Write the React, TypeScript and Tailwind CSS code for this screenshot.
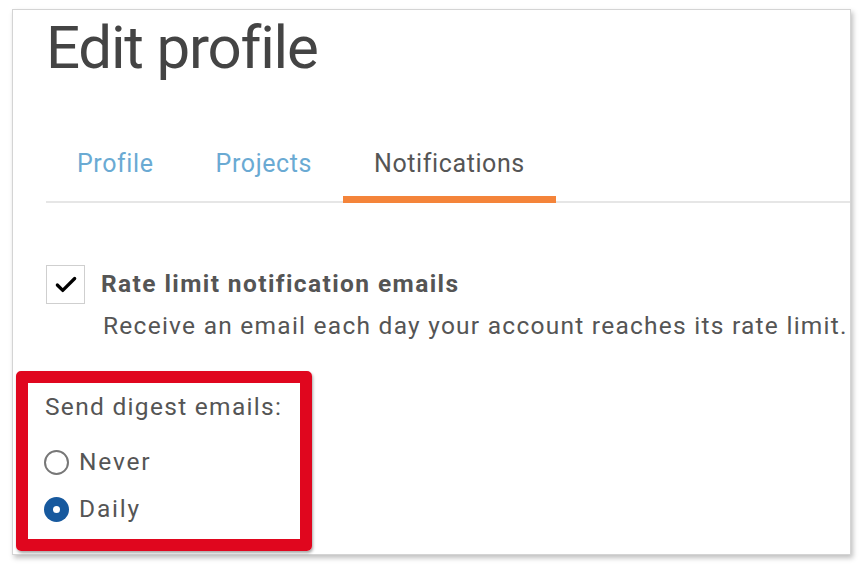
import { Check } from "lucide-react";

const tabs = ["Profile", "Projects", "Notifications"];

const Radio = ({ checked, label }: { checked?: boolean; label: string }) => (
  <label className="flex items-center gap-[10px] h-[26px]">
    {checked ? (
      <span className="w-[25px] h-[25px] rounded-full bg-[#17599e] flex items-center justify-center">
        <span className="w-[7px] h-[7px] rounded-full bg-white" />
      </span>
    ) : (
      <span className="w-[25px] h-[25px] rounded-full border-2 border-[#777]" />
    )}
    <span className="text-[24.5px] text-[#555] tracking-[1.8px]">{label}</span>
  </label>
);

export default function App() {
  return (
    <div className="w-[860px] h-[570px] bg-white pt-[9px] pl-[12px] font-['Roboto',sans-serif] text-[#555]">
      <div className="w-[839px] h-[546px] border border-[#d4d4d4] bg-white shadow-[2px_3px_5px_rgba(0,0,0,0.25)] pl-[33px] flex flex-col">
        <h1 className="text-[60px] leading-none text-[#444] tracking-[-1.2px] mt-[8px] h-[60px]">
          Edit profile
        </h1>

        <div className="flex mt-[63px] border-b-2 border-[#e6e6e6]">
          {tabs.map((t, i) => (
            <div
              key={t}
              className={
                i === 2
                  ? "px-[31px] pt-[8px] pb-[17px] text-[25px] leading-[30px] tracking-[0.6px] text-[#555] border-b-[7px] border-[#f4843a] -mb-[2px]"
                  : "px-[31px] pt-[8px] pb-[17px] text-[25px] leading-[30px] tracking-[0.6px] text-[#6aaad3] border-b-[7px] border-transparent -mb-[2px]"
              }
            >
              {t}
            </div>
          ))}
        </div>

        <div className="flex mt-[62px] gap-[16px]">
          <span className="w-[39px] h-[39px] border border-[#cfcfcf] flex items-center justify-center shrink-0">
            <Check className="w-[26px] h-[26px] text-black" strokeWidth={3} />
          </span>
          <div className="flex flex-col pt-[4px]">
            <span className="text-[24.5px] font-bold leading-[30px] tracking-[1.4px] text-[#555]">
              Rate limit notification emails
            </span>
            <span className="text-[24.5px] leading-[30px] tracking-[1.25px] text-[#555] mt-[12px] ml-[2px]">
              Receive an email each day your account reaches its rate limit.
            </span>
          </div>
        </div>

        <div className="-ml-[30px] mt-[30px] w-[296px] h-[180px] border-[12px] border-[#e0061e] rounded-[5px] shadow-[1px_2px_3px_rgba(0,0,0,0.35)] pl-[17px] pt-[9px]">
          <div className="text-[24.5px] tracking-[1.3px] leading-[30px]">Send digest emails:</div>
          <div className="flex flex-col gap-[21px] mt-[27px] -ml-[1px]">
            <Radio label="Never" />
            <Radio label="Daily" checked />
          </div>
        </div>
      </div>
    </div>
  );
}
